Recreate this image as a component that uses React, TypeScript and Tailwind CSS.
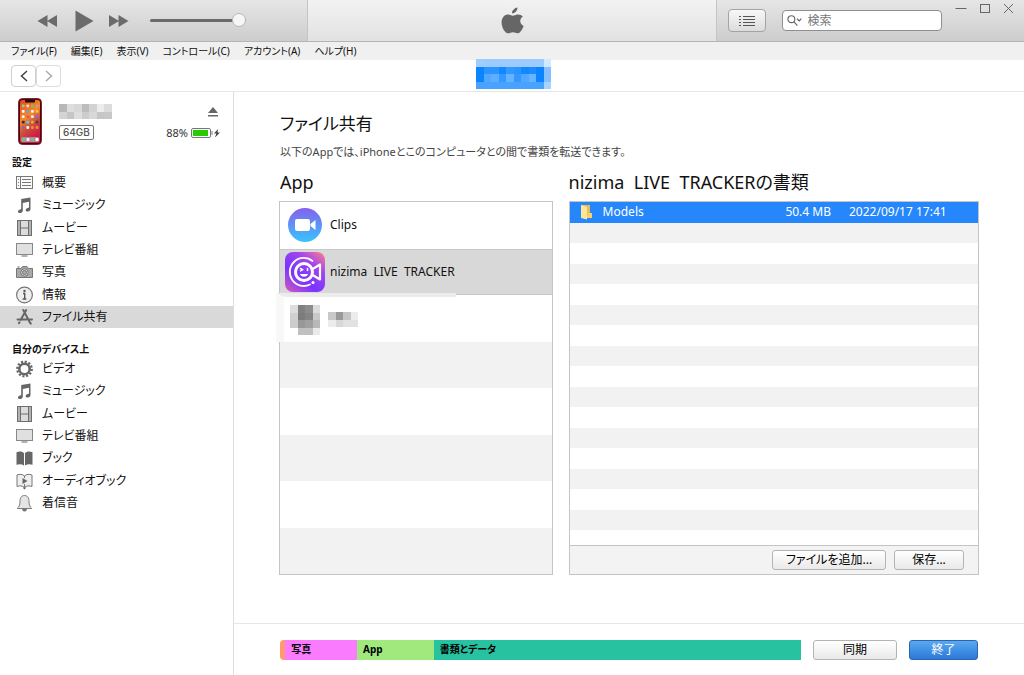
import type { ReactNode } from 'react';

type MenuEntry = {
  id: string;
  label: string;
  icon: ReactNode;
};

// Pixelated block used in place of private names and icons
const Mosaic = ({ rows, className }: { rows: string[][]; className: string }) => (
  <svg
    className={className}
    viewBox={`0 0 ${rows[0].length} ${rows.length}`}
    preserveAspectRatio="none"
    shapeRendering="crispEdges"
    aria-hidden="true"
  >
    {rows.map((row, y) =>
      row.map((fill, x) => <rect key={`${x}-${y}`} x={x} y={y} width="1" height="1" fill={fill} />)
    )}
  </svg>
);

const tabMosaic = [
  ['#a0cdff', '#9ccbff', '#9ccbff', '#9ccbff', '#9ccbff', '#9ccbff', '#9ccbff', '#9ccbff', '#9ccbff', '#d3e8ff'],
  ['#0a84ff', '#2b95ff', '#2b95ff', '#1088ff', '#3399ff', '#2b95ff', '#1088ff', '#1a8cff', '#0a84ff', '#85c0ff'],
  ['#0a84ff', '#52a8ff', '#5eaeff', '#3399ff', '#66b3ff', '#3399ff', '#52a8ff', '#66b3ff', '#0a84ff', '#85c0ff'],
  ['#47a3ff', '#47a3ff', '#47a3ff', '#47a3ff', '#47a3ff', '#47a3ff', '#47a3ff', '#47a3ff', '#47a3ff', '#a8d3ff'],
];

const deviceMosaic = [
  ['#b8b8b8', '#dedede', '#d8d8d8', '#bcbcbc', '#d2d2d2', '#ececec', '#dcdcdc'],
  ['#d4d4d4', '#c6c6c6', '#dedede', '#cccccc', '#d8d8d8', '#c6c6c6', '#c8c8c8'],
];

const appIconMosaic = [
  ['#dddddd', '#808080', '#8c8c8c', '#dcdcdc'],
  ['#d0d0d0', '#7c7c7c', '#848484', '#c8c8c8'],
  ['#cccccc', '#989898', '#a0a0a0', '#b8b8b8'],
  ['#ffffff', '#c0c0c0', '#c0c0c0', '#eaeaea'],
];

const appNameMosaic = [
  ['#c8c8c8', '#999999', '#c6c6c6', '#ececec'],
  ['#ececec', '#d8d8d8', '#e2e2e2', '#e2e2e2'],
];

const SummaryIcon = () => (
  <svg width="18" height="18" viewBox="0 0 18 18" fill="none" stroke="#777">
    <rect x=".5" y="2.500" width="16" height="12" fill="#fafafa" />
    <path d="M4.500 2.500v12M6 5.500h9M6 8.500h9M6 11.500h9M2 5.500h1M2 8.500h1M2 11.500h1" />
  </svg>
);

const MusicIcon = () => (
  <svg width="18" height="18" viewBox="0 0 18 18" fill="#666">
    <path d="M5.200 3L14.500 1.500V13c0 1.500-1 2.400-2.500 2.600-1.500.1-2.300-.6-2.300-1.600 0-1.200.9-1.900 2.200-2.100.8-.2 1.100-.4 1.100-1V5.800l-6.200 1.100v7.600c0 1.500-1 2.400-2.500 2.600-1.400.1-2.300-.6-2.300-1.600 0-1.200.9-1.900 2.200-2.100.8-.2 1-.4 1-1z" />
  </svg>
);

const MovieIcon = () => (
  <svg width="18" height="18" viewBox="0 0 18 18" fill="none" stroke="#6e6e6e">
    <rect x="1.500" y="1.500" width="14" height="15" fill="#dcdcdc" />
    <path d="M4.500 1.500v15M12.500 1.500v15M4.500 9h8" />
    <path d="M3 2.500v14M14 2.500v14" strokeWidth="1.500" strokeDasharray="1 1" />
  </svg>
);

const TvIcon = () => (
  <svg width="18" height="18" viewBox="0 0 18 18" fill="none" stroke="#888">
    <rect x=".5" y="2.500" width="16" height="11" fill="#e0e0e0" />
    <path d="M5.500 15h6" stroke="#666" />
  </svg>
);

const CameraIcon = () => (
  <svg width="18" height="18" viewBox="0 0 18 18" fill="none" stroke="#777">
    <path d="M.5 5.500h4.500L6.500 3.500h4.500l1.500 2h4v9h-16z" fill="#a9a9a9" />
    <path d="M1.500 4h2" strokeWidth="1.200" />
    <circle cx="8.500" cy="9.500" r="3.800" fill="#d0d0d0" />
    <circle cx="8.500" cy="9.500" r="2" fill="#a9a9a9" />
  </svg>
);

const InfoIcon = () => (
  <svg width="18" height="18" viewBox="0 0 18 18" fill="none" stroke="#777">
    <circle cx="8.500" cy="9" r="7.900" fill="#eee" strokeWidth="1.200" />
    <circle cx="8.500" cy="5" r="1.200" fill="#555" stroke="none" />
    <path d="M7 7.500h1.700v5M6.700 13h3.600" stroke="#555" strokeWidth="1.400" />
  </svg>
);

const AppStoreIcon = () => (
  <svg width="18" height="18" viewBox="0 0 18 18" fill="none" stroke="#666" strokeWidth="2" strokeLinecap="round">
    <path d="M7.300 2l6.700 12.800M10.200 2L4.600 12M1.500 11.500h9.200M13.500 11.500h2.500M3.500 14.400l-.6.800M14.500 15l.3.600" />
  </svg>
);

const GearIcon = () => (
  <svg width="18" height="18" viewBox="0 0 18 18" fill="none" stroke="#666">
    <circle cx="8.500" cy="9" r="5.200" strokeWidth="2.600" />
    <circle cx="8.500" cy="9" r="7.300" strokeWidth="2.200" strokeDasharray="2.100 1.722" />
  </svg>
);

const BookIcon = () => (
  <svg width="18" height="18" viewBox="0 0 18 18" fill="#666">
    <path d="M8 4.200C6.500 2 3 2 .5 3.200v12.600c2.500-1 5.300-.8 7.500.7zM9 4.200C10.500 2 14 2 16.500 3.200v12.600c-2.500-1-5.300-.8-7.500.7z" />
  </svg>
);

const AudioBookIcon = () => (
  <svg width="18" height="18" viewBox="0 0 18 18" fill="none" stroke="#777">
    <path d="M8.500 4C6.500 2 3.500 2 1 3v11.500c2.500-1 5.500-1 7.500 1 2-2 5-2 7.500-1V3c-2.500-1-5.500-1-7.500 1z" fill="#eee" />
    <path d="M8.500 4v2M8.500 12v3" />
    <path d="M6.500 6l5 3-5 3z" fill="#666" stroke="none" />
    <path d="M6.500 15.500h4l-2 2z" fill="#666" stroke="none" />
  </svg>
);

const BellIcon = () => (
  <svg width="18" height="18" viewBox="0 0 18 18" fill="none" stroke="#777">
    <path d="M8.500 1.500C5 1.500 4 4.500 4 7.500c0 3.500-1 5.500-2.500 6.500v.5h14V14c-1.500-1-2.500-3-2.500-6.500 0-3-1-6-4.500-6z" fill="#e4e4e4" />
    <path d="M6.500 15.500h4c0 2-4 2-4 0z" fill="#666" />
  </svg>
);

const settings: MenuEntry[] = [
  { id: 'summary', label: '概要', icon: <SummaryIcon /> },
  { id: 'music', label: 'ミュージック', icon: <MusicIcon /> },
  { id: 'movies', label: 'ムービー', icon: <MovieIcon /> },
  { id: 'tv', label: 'テレビ番組', icon: <TvIcon /> },
  { id: 'photos', label: '写真', icon: <CameraIcon /> },
  { id: 'info', label: '情報', icon: <InfoIcon /> },
  { id: 'sharing', label: 'ファイル共有', icon: <AppStoreIcon /> },
];

const onDevice: MenuEntry[] = [
  { id: 'device-video', label: 'ビデオ', icon: <GearIcon /> },
  { id: 'device-music', label: 'ミュージック', icon: <MusicIcon /> },
  { id: 'device-movies', label: 'ムービー', icon: <MovieIcon /> },
  { id: 'device-tv', label: 'テレビ番組', icon: <TvIcon /> },
  { id: 'device-books', label: 'ブック', icon: <BookIcon /> },
  { id: 'device-audiobooks', label: 'オーディオブック', icon: <AudioBookIcon /> },
  { id: 'device-tones', label: '着信音', icon: <BellIcon /> },
];

const menus = ['ファイル(F)', '編集(E)', '表示(V)', 'コントロール(C)', 'アカウント(A)', 'ヘルプ(H)'];

const storage = [
  { label: '', share: 1, color: 'bg-[#ff9a6c]' },
  { label: '写真', share: 13.8, color: 'bg-[#fb7bff]' },
  { label: 'App', share: 14.7, color: 'bg-[#a1e97c]' },
  { label: '書類とデータ', share: 70.5, color: 'bg-[#27c3a1]' },
];

const greyButton =
  'h-5 rounded-[3px] border border-[#b4b4b4] bg-gradient-to-b from-white to-[#e9e9e9] text-xs leading-none text-black';

const NavList = ({ items, selected }: { items: MenuEntry[]; selected?: string }) => (
  <ul className="grid h-[156px] auto-rows-fr">
    {items.map((item) => (
      <li key={item.id} className="min-h-0">
        <a
          href={`#${item.id}`}
          className={`flex h-full items-center gap-2 pl-4 text-xs ${item.id === selected ? 'bg-[#d9d9d9]' : ''}`}
        >
          {item.icon}
          {item.label}
        </a>
      </li>
    ))}
  </ul>
);

const Toolbar = () => (
  <header className="flex h-[42px] border-b border-[#b4b4b4]">
    <div className="flex w-[308px] items-center border-r border-[#c4c4c4] bg-gradient-to-b from-[#e6e6e6] to-[#cdcdcd] pl-9">
      <button aria-label="前へ">
        <svg width="22" height="14" viewBox="0 0 22 14" fill="#6b6b6b">
          <path d="M11.500 1v12L1.500 7zM21 1v12L11 7z" />
        </svg>
      </button>
      <button aria-label="再生" className="ml-4">
        <svg width="22" height="22" viewBox="0 0 22 22" fill="#6b6b6b">
          <path d="M1.500 .5v21l18-10.500z" />
        </svg>
      </button>
      <button aria-label="次へ" className="ml-3">
        <svg width="22" height="14" viewBox="0 0 22 14" fill="#6b6b6b">
          <path d="M1 1v12l10-6zM10.500 1v12l10-6z" />
        </svg>
      </button>
      <input
        type="range"
        aria-label="音量"
        defaultValue={100}
        className="ml-5 h-4 w-[96px] appearance-none bg-transparent [&::-webkit-slider-runnable-track]:h-[3px] [&::-webkit-slider-runnable-track]:rounded-full [&::-webkit-slider-runnable-track]:bg-[#6b6b6b] [&::-webkit-slider-thumb]:-mt-[6px] [&::-webkit-slider-thumb]:size-[14px] [&::-webkit-slider-thumb]:appearance-none [&::-webkit-slider-thumb]:rounded-full [&::-webkit-slider-thumb]:border [&::-webkit-slider-thumb]:border-[#b8b8b8] [&::-webkit-slider-thumb]:bg-[#f6f6f6]"
      />
    </div>

    <div className="flex flex-1 items-center justify-center bg-gradient-to-b from-[#f2f2f2] to-[#e2e2e2]">
      <svg width="23" height="28" viewBox="0 0 24 29" fill="#666">
        <path d="M17.200.300c.2 3.200-2.600 6.300-5.700 6.200C11.200 3.600 14.200.600 17.200.300zM22.800 9.900c-4 2.500-3.400 8 .8 9.700-1 3.100-3.300 7.200-5.800 7.700-1.900.4-2.900-1-5.300-1-2.400 0-3.300 1.300-5.200 1.100C3.900 27 .7 21.200.6 16.300.5 11.300 3.500 7.700 7.300 7.700c2 0 3.400 1.200 5 1.200 1.500 0 3-1.400 5.500-1.300 2 0 3.900.9 5 2.300z" />
      </svg>
    </div>

    <div className="flex w-[308px] border-l border-[#c4c4c4] bg-gradient-to-b from-[#e6e6e6] to-[#cdcdcd] pl-[11px]">
      <button
        aria-label="リスト表示"
        className="mt-[9px] flex h-[23px] w-[38px] items-center justify-center rounded-[4px] border border-[#a4a4a4] bg-gradient-to-b from-[#f8f8f8] to-[#dcdcdc]"
      >
        <svg width="16" height="11" viewBox="0 0 16 11" stroke="#555">
          <path d="M0 1.500h2M4 1.500h12M0 4.500h2M4 4.500h12M0 7.500h2M4 7.500h12M0 10.500h2M4 10.500h12" />
        </svg>
      </button>
      <label className="mt-[10px] ml-4 flex h-[21px] w-40 items-center rounded-[4px] border border-[#8f8f8f] bg-white pl-1">
        <svg width="18" height="13" viewBox="0 0 18 13" fill="none" stroke="#666" strokeWidth="1.300">
          <circle cx="5" cy="5" r="4" />
          <path d="M8 8l4 4.500" />
          <path d="M11.500 4.500l2.500 2.500 2.500-2.500" />
        </svg>
        <input
          type="search"
          aria-label="検索"
          placeholder="検索"
          className="ml-[5px] w-full min-w-0 bg-transparent text-xs outline-none placeholder:text-[#777]"
        />
      </label>
      <div className="ml-[13px] flex gap-3 self-start pt-[3px]">
        <button aria-label="最小化">
          <svg width="12" height="12" viewBox="0 0 12 12" stroke="#666"><path d="M.5 5.500h11" /></svg>
        </button>
        <button aria-label="最大化">
          <svg width="12" height="12" viewBox="0 0 12 12" fill="none" stroke="#666"><rect x="1.500" y="1.500" width="9" height="8" /></svg>
        </button>
        <button aria-label="閉じる">
          <svg width="12" height="12" viewBox="0 0 12 12" stroke="#666"><path d="M1 1l9 9M10 1l-9 9" /></svg>
        </button>
      </div>
    </div>
  </header>
);

const PhonePicture = () => (
  <svg width="24" height="47" viewBox="0 0 24 47" aria-hidden="true">
    <defs>
      <linearGradient id="wall" x1="0" y1="0" x2="0.400" y2="1">
        <stop offset="0" stopColor="#e0451f" />
        <stop offset="0.450" stopColor="#f58a2a" />
        <stop offset="0.700" stopColor="#c9503c" />
        <stop offset="1" stopColor="#cf1b45" />
      </linearGradient>
    </defs>
    <rect x=".5" y=".5" width="23" height="46" rx="4" fill="#3a0d12" stroke="#8f1f2d" />
    <rect x="2" y="2" width="20" height="43" rx="2.500" fill="url(#wall)" />
    <path d="M7 2h10v1.500c0 .5-.5 1-1 1H8c-.5 0-1-.5-1-1z" fill="#2a0a0e" />
    {['#8fd08a', '#f3d9c8', '#7fbf6a', '#b8a08f', '#fff', '#5aa7e8', '#f2f2f2', '#f6c14b', '#f3ece8', '#e9554b', '#ececec', '#7d6be0', '#2f3542', '#5ac8fa', '#f8a23c', '#444', '#9b59b6', '#f5f5f5', '#f2883a', '#f08a3c'].map(
      (fill, i) => (
        <rect key={i} x={3.8 + (i % 4) * 4.6} y={6.5 + Math.floor(i / 4) * 5.4} width="2.800" height="2.800" rx=".8" fill={fill} />
      )
    )}
    <rect x="3" y="39" width="18" height="5" rx="1.500" fill="#c87aa0" />
    <rect x="4" y="40" width="3" height="3" rx=".8" fill="#4cd964" />
    <rect x="8.500" y="40" width="3" height="3" rx=".8" fill="#e4f2ff" />
    <rect x="13" y="40" width="3" height="3" rx=".8" fill="#54d86a" />
    <rect x="17.500" y="40" width="3" height="3" rx=".8" fill="#fff" />
  </svg>
);

const Sidebar = () => (
  <aside className="w-[234px] shrink-0 border-r border-[#dedede]">
    <div className="flex h-[60px] gap-[17px] pt-[6px] pr-3 pl-[18px]">
      <PhonePicture />
      <div className="flex flex-1 flex-col gap-[6px] pt-[6px]">
        <div className="flex items-center justify-between">
          <Mosaic rows={deviceMosaic} className="h-[15px] w-[53px]" />
          <button aria-label="取り出す" className="pr-[3px]">
            <svg width="10" height="10" viewBox="0 0 10 10" fill="#666">
              <path d="M5 0l5 6H0zM0 8h10v1.600H0z" />
            </svg>
          </button>
        </div>
        <div className="flex items-center justify-between">
          <span className="rounded-[2px] border border-[#777] px-[3px] font-['Inter'] text-[10px] leading-[13px] font-medium text-[#555]">
            64GB
          </span>
          <span className="flex items-center gap-[2px] text-[11px] leading-[13px] text-[#333]">
            88%
            <svg width="30" height="10" viewBox="0 0 30 10" className="ml-[1px]">
              <rect x=".5" y=".5" width="19" height="9" rx="1.500" fill="#fff" stroke="#777" />
              <rect x="2" y="2" width="15" height="6" fill="#25cc00" />
              <path d="M21 3v4" stroke="#777" />
              <path d="M27 1l-4 4.500h2.300L24 9.500l5-5h-2.500z" fill="#444" />
            </svg>
          </span>
        </div>
      </div>
    </div>
    <h2 className="flex h-5 items-center pl-3 text-[10px] font-bold">設定</h2>
    <NavList items={settings} selected="sharing" />
    <h2 className="flex h-[30px] items-center pt-3 pl-3 text-[10px] font-bold">自分のデバイス上</h2>
    <NavList items={onDevice} />
  </aside>
);

const ClipsIcon = () => (
  <svg width="34" height="34" viewBox="0 0 34 34" className="mx-[3px]" aria-hidden="true">
    <defs>
      <linearGradient id="clips" x1="0" y1="0" x2="0" y2="1">
        <stop offset="0" stopColor="#8560ee" />
        <stop offset="1" stopColor="#37c5fd" />
      </linearGradient>
    </defs>
    <circle cx="17" cy="17" r="17" fill="url(#clips)" />
    <rect x="7" y="11" width="15" height="12" rx="2" fill="#fff" />
    <path d="M22.500 16l5-4v10l-5-4z" fill="#fff" />
  </svg>
);

const TrackerIcon = () => (
  <svg width="40" height="40" viewBox="0 0 40 40" aria-hidden="true">
    <defs>
      <linearGradient id="tracker" x1="1" y1="0" x2="0.200" y2="1">
        <stop offset="0" stopColor="#ff7f8f" />
        <stop offset="0.350" stopColor="#a043ee" />
        <stop offset="0.700" stopColor="#7a34ff" />
        <stop offset="1" stopColor="#c052cc" />
      </linearGradient>
    </defs>
    <rect width="40" height="40" rx="8" fill="url(#tracker)" />
    <path d="M27.500 9A14 14 0 1 0 25 32.500" fill="none" stroke="#fff" strokeWidth="1.800" strokeLinecap="round" />
    <circle cx="19" cy="20" r="8.500" fill="none" stroke="#fff" strokeWidth="3" />
    <path d="M28.500 16.500l6.500-4v15l-6.500-4" fill="none" stroke="#fff" strokeWidth="2.200" strokeLinejoin="round" strokeLinecap="round" />
    <path d="M15.500 16.500l2 1.200-2 1.200M22.500 16.500v2" fill="none" stroke="#fff" strokeWidth="1.500" strokeLinecap="round" />
    <path d="M15 22h8c-.8 3.600-7.200 3.600-8 0z" fill="#fff" />
    <circle cx="28" cy="30.500" r="1.500" fill="#fff" />
  </svg>
);

const AppList = () => (
  <ul className="relative grid h-[374px] auto-rows-fr border border-[#c4c4c4] text-xs">
    <li className="flex items-center gap-1 pl-[5px]">
      <ClipsIcon />
      <span className="pl-[1px]">Clips</span>
    </li>
    <li className="flex items-center gap-1 border-y border-[#c8c8c8] bg-[#d8d8d8] pl-[5px]">
      <TrackerIcon />
      <span className="pl-[1px] whitespace-pre">nizima  LIVE  TRACKER</span>
    </li>
    <li className="bg-white">
      <div className="absolute -left-1 top-[91px] flex h-[49px] w-[180px] items-center gap-2 border-t-4 border-l-8 border-t-[#ececec] border-l-[#f8f8f8] bg-white pl-[6px]">
        <Mosaic rows={appIconMosaic} className="size-[30px]" />
        <Mosaic rows={appNameMosaic} className="h-[15px] w-[30px]" />
      </div>
    </li>
    {[3, 4, 5, 6, 7].map((n) => (
      <li key={n} className="odd:bg-white even:bg-[#f2f2f2]" />
    ))}
  </ul>
);

const FilePane = () => (
  <div className="flex h-[374px] flex-col border border-[#c4c4c4]">
    <div className="min-h-0 flex-1 overflow-hidden">
      <table className="h-[349px] w-full text-xs leading-4">
        <tbody>
          <tr className="h-5 bg-[#2587fb] text-white">
            <td className="w-[33px] pl-[10px]">
              <svg width="13" height="16" viewBox="0 0 13 16" aria-hidden="true">
                <path d="M1 1h9v13H1z" fill="#e9bd55" />
                <path d="M1 1l6 2v12.500L1 14z" fill="#ffe59a" />
                <path d="M8 9h4v5H7z" fill="#f7d273" />
              </svg>
            </td>
            <td>Models</td>
            <td className="w-[80px] text-right">50.4 MB</td>
            <td className="w-[147px] pl-[18px]">2022/09/17 17:41</td>
          </tr>
          {Array.from({ length: 16 }, (_, i) => (
            <tr key={i} className="h-5 odd:bg-white even:bg-[#f2f2f2]">
              <td colSpan={4} />
            </tr>
          ))}
        </tbody>
      </table>
    </div>
    <div className="flex h-[29px] items-center justify-end gap-2 border-t border-[#c4c4c4] bg-[#f3f3f3] pr-[14px]">
      <button className={`${greyButton} w-[114px]`}>ファイルを追加...</button>
      <button className={`${greyButton} w-[70px]`}>保存...</button>
    </div>
  </div>
);

const App = () => {
  return (
    <div className="flex min-h-screen flex-col bg-white font-['Noto_Sans','Noto_Sans_CJK_JP',sans-serif] text-[#111] [font-feature-settings:'palt']">
      <Toolbar />
      <nav className="flex h-[18px] items-center gap-[14px] bg-[#f0f0f0] pl-[11px] text-[10px] leading-none">
        {menus.map((menu) => (
          <button key={menu}>{menu}</button>
        ))}
      </nav>

      <div className="relative flex h-8 items-center border-b border-[#e6e6e6] pl-[11px]">
        <button aria-label="戻る" className="flex h-[22px] w-[25px] items-center justify-center rounded-[4px] border border-[#cfcfcf]">
          <svg width="8" height="12" viewBox="0 0 8 12" fill="none" stroke="#444" strokeWidth="1.500"><path d="M7 1L1.500 6 7 11" /></svg>
        </button>
        <button aria-label="進む" className="flex h-[22px] w-[25px] items-center justify-center rounded-[4px] border border-[#dcdcdc]">
          <svg width="8" height="12" viewBox="0 0 8 12" fill="none" stroke="#aaa" strokeWidth="1.500"><path d="M1 1l5.500 5L1 11" /></svg>
        </button>
        <div className="absolute inset-x-0 -top-px flex justify-center pl-[3px]">
          <Mosaic rows={tabMosaic} className="h-[30px] w-[75px]" />
        </div>
      </div>

      <div className="flex flex-1">
        <Sidebar />
        <main className="flex min-w-0 flex-1 flex-col">
          <section className="flex-1 px-[45px] pt-5">
            <h1 className="pl-px text-[17px] leading-6">ファイル共有</h1>
            <p className="mt-1 pl-px text-[11px] leading-6 text-[#444]">
              以下のAppでは、iPhoneとこのコンピュータとの間で書類を転送できます。
            </p>
            <div className="mt-[6px] grid grid-cols-[2fr_3fr] gap-4">
              <div>
                <h2 className="mb-[7px] pl-px text-lg leading-6">App</h2>
                <AppList />
              </div>
              <div>
                <h2 className="mb-[7px] text-lg leading-6 whitespace-pre">nizima  LIVE  TRACKERの書類</h2>
                <FilePane />
              </div>
            </div>
          </section>

          <footer className="flex h-[52px] items-center border-t border-[#e6e6e6] pr-[46px] pl-[46px]">
            <div className="flex h-5 flex-1 overflow-hidden rounded-l-[4px] text-[10px] font-bold text-black">
              {storage.map((part) => (
                <div
                  key={part.color}
                  className={`flex items-center overflow-hidden ${part.color} ${part.label ? 'pl-[6px]' : ''}`}
                  style={{ width: `${part.share}%` }}
                >
                  {part.label}
                </div>
              ))}
            </div>
            <button className={`${greyButton} ml-3 w-[84px]`}>同期</button>
            <button className="ml-3 h-5 w-[69px] rounded-[3px] border border-[#2a66ad] bg-gradient-to-b from-[#5aa9f0] to-[#2b78d8] text-xs leading-none text-white">
              終了
            </button>
          </footer>
        </main>
      </div>
    </div>
  );
};

export default App;
